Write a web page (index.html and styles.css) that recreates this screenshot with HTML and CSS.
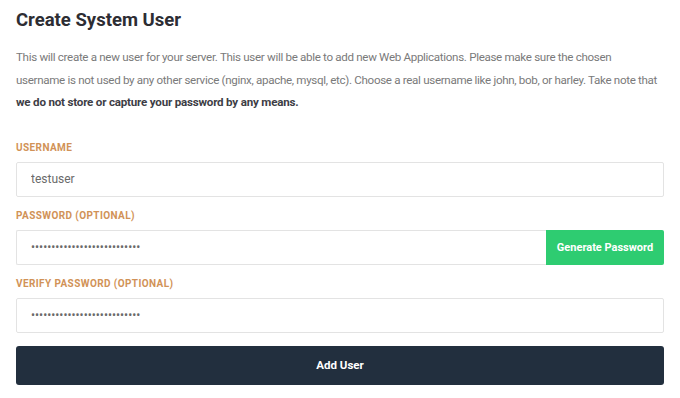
FILE: index.html
```html
<!DOCTYPE html>
<html lang="en">
<head>
    <meta charset="UTF-8">
    <meta name="viewport" content="width=device-width, initial-scale=1.0">
    <title>Create System User</title>
    <link rel="stylesheet" href="styles.css">
</head>
<body>
    <div class="panel">
        <h1>Create System User</h1>
        <p class="intro">
            This will create a new user for your server. This user will be able to add new Web Applications. Please make sure the chosen<br>
            username is not used by any other service (nginx, apache, mysql, etc). Choose a real username like john, bob, or harley. Take note that<br>
            <strong>we do not store or capture your password by any means.</strong>
        </p>

        <form class="user-form">
            <label class="field-label" for="username">Username</label>
            <input class="field" id="username" type="text" value="testuser">

            <label class="field-label" for="password">Password (optional)</label>
            <div class="field-group">
                <input class="field" id="password" type="password" value="abcdefghijklmnopqrstuvwxyz1">
                <button type="button" class="btn-generate">Generate Password</button>
            </div>

            <label class="field-label" for="verify">Verify Password (optional)</label>
            <input class="field" id="verify" type="password" value="abcdefghijklmnopqrstuvwxyz1">

            <button type="submit" class="btn-submit">Add User</button>
        </form>
    </div>
</body>
</html>
```

FILE: styles.css
```css
body {
    margin: 0;
    background: #fff;
    font-family: Roboto, "Liberation Sans", sans-serif;
    color: #333;
}
.panel {
    padding: 8px 16px 0 16px;
}
h1 {
    margin: 0;
    font-size: 18.5px;
    font-weight: 700;
    color: #2d2d33;
    line-height: 24px;
}
.intro {
    margin: 14px 0 0 0;
    font-size: 11.6px;
    line-height: 22.6px;
    color: #7a7a7a;
    letter-spacing: -0.32px;
    white-space: nowrap;
}
.intro strong {
    color: #3d3d45;
    letter-spacing: -0.2px;
}
.user-form {
    display: flex;
    flex-direction: column;
    margin-top: 27px;
}
.field-label {
    font-size: 10px;
    font-weight: 700;
    text-transform: uppercase;
    letter-spacing: 0.4px;
    color: #d19257;
    line-height: 14px;
    margin-bottom: 7px;
}
.field {
    box-sizing: border-box;
    height: 35px;
    border: 1px solid #e3e3e3;
    border-radius: 2px;
    padding: 0 14px;
    font-family: inherit;
    font-size: 12px;
    color: #6a6a6a;
    margin-bottom: 12px;
    outline: none;
}
.field-group {
    display: flex;
    margin-bottom: 12px;
}
.field-group .field {
    flex: 1;
    margin: 0;
    border-right: none;
    border-radius: 2px 0 0 2px;
}
.btn-generate {
    width: 118px;
    height: 35px;
    border: none;
    border-radius: 0 2px 2px 0;
    background: #2ecc71;
    color: #fff;
    font-family: inherit;
    font-size: 11px;
    font-weight: 700;
}
.btn-submit {
    margin-top: 1px;
    height: 39px;
    border: none;
    border-radius: 3px;
    background: #222f3e;
    color: #fff;
    font-family: inherit;
    font-size: 11.5px;
    font-weight: 700;
}
```
